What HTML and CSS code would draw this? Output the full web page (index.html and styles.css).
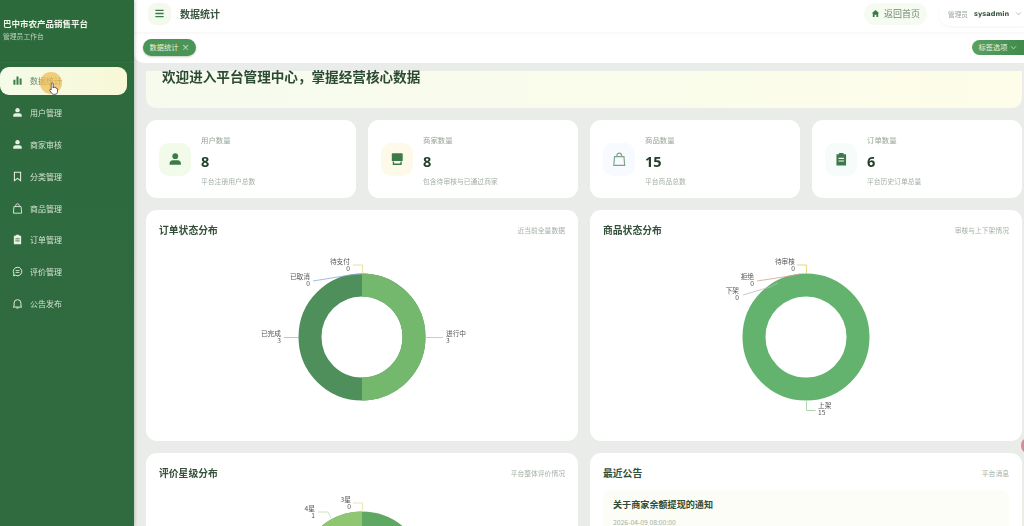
FILE: index.html
```html
<!DOCTYPE html>
<html lang="zh-CN">
<head>
<meta charset="utf-8">
<title>数据统计</title>
<link rel="stylesheet" href="styles.css">
</head>
<body>
<svg class="defs" width="0" height="0" aria-hidden="true">
  <symbol id="i-bars" viewBox="0 0 16 16"><path d="M2 7h3v7H2zM6.500 2h3v12h-3zM11 5h3v9h-3z" fill="currentColor"/></symbol>
  <symbol id="i-user" viewBox="0 0 16 16"><circle cx="8" cy="4.600" r="3.200" fill="currentColor"/><path d="M1.800 14v-1.600c0-2 1.800-3.200 3.400-3.200h5.600c1.600 0 3.400 1.200 3.400 3.200V14z" fill="currentColor"/></symbol>
  <symbol id="i-mark" viewBox="0 0 16 16"><path d="M3.500 1.800h9v12.400L8 10.800l-4.500 3.400z" fill="none" stroke="currentColor" stroke-width="1.500"/></symbol>
  <symbol id="i-bag" viewBox="0 0 16 16"><path d="M2.800 5.200h10.400l.8 9.600H2zM5.400 5.200V3.800a2.600 2.600 0 0 1 5.200 0v1.400" fill="none" stroke="currentColor" stroke-width="1.300"/></symbol>
  <symbol id="i-clip" viewBox="0 0 16 16"><path d="M5.500 1h5v1.600h2.800v12.400H2.700V2.600h2.800z" fill="currentColor"/><path d="M5 7h6M5 10h6" stroke="var(--ink,#fff)" stroke-width="1.200"/></symbol>
  <symbol id="i-chat" viewBox="0 0 16 16"><path d="M8 1.800a6.200 6.200 0 1 1-3 11.600l-2.900.8.800-2.800A6.200 6.200 0 0 1 8 1.800z" fill="none" stroke="currentColor" stroke-width="1.400"/><path d="M5.200 6.600h5.600M5.200 9.400h5.600" stroke="currentColor" stroke-width="1.200"/></symbol>
  <symbol id="i-bell" viewBox="0 0 16 16"><path d="M3 12.200V7.400a5 5 0 0 1 10 0v4.800l1.200 1H1.800z" fill="none" stroke="currentColor" stroke-width="1.400"/><path d="M6.400 14.600h3.200" stroke="currentColor" stroke-width="1.400"/></symbol>
  <symbol id="i-shop" viewBox="0 0 16 16"><path d="M2 2.500q0-1 1-1h10q1 0 1 1v7.500H2z" fill="currentColor"/><path d="M3.800 10.500v3h8.400v-3" fill="none" stroke="currentColor" stroke-width="1.500"/></symbol>
  <symbol id="i-down" viewBox="0 0 10 10"><path d="M1.500 3.400 5 6.900l3.500-3.500" fill="none" stroke="currentColor" stroke-width="1"/></symbol>
</svg>

<div class="app">
  <aside class="sidebar">
    <div class="brand">
      <div class="brand-name">巴中市农产品销售平台</div>
      <div class="brand-sub">管理员工作台</div>
    </div>
    <nav class="menu">
      <a class="menu-item active"><svg class="menu-icon"><use href="#i-bars"/></svg><span>数据统计</span>
        <i class="click-dot"></i>
        <svg class="hand" viewBox="0 0 12 16"><path d="M3.800 1.200c.8 0 1.200.5 1.200 1.200v5l.5-1.200c1-.3 1.500.1 1.600.7.9-.3 1.500.1 1.600.8.9-.2 1.500.3 1.500 1.100v3c0 1.800-1.200 3.200-3 3.200H5.500c-1 0-1.700-.5-2.300-1.300L.9 10.300c-.5-.8.500-1.700 1.300-1L2.600 9.700V2.400c0-.7.400-1.200 1.200-1.200z" fill="#fff" stroke="#333" stroke-width=".9"/></svg>
      </a>
      <a class="menu-item hovered"><svg class="menu-icon"><use href="#i-user"/></svg><span>用户管理</span></a>
      <a class="menu-item"><svg class="menu-icon"><use href="#i-user"/></svg><span>商家审核</span></a>
      <a class="menu-item"><svg class="menu-icon"><use href="#i-mark"/></svg><span>分类管理</span></a>
      <a class="menu-item"><svg class="menu-icon"><use href="#i-bag"/></svg><span>商品管理</span></a>
      <a class="menu-item"><svg class="menu-icon ink-green"><use href="#i-clip"/></svg><span>订单管理</span></a>
      <a class="menu-item"><svg class="menu-icon"><use href="#i-chat"/></svg><span>评价管理</span></a>
      <a class="menu-item"><svg class="menu-icon"><use href="#i-bell"/></svg><span>公告发布</span></a>
    </nav>
  </aside>

  <div class="main">
    <header class="topbar">
      <button class="burger" aria-label="菜单"><svg viewBox="0 0 12 12"><path d="M1.500 2.500h9M1.500 6h9M1.500 9.500h9" stroke="#3c7a48" stroke-width="1.400"/></svg></button>
      <div class="page-title">数据统计</div>
      <div class="top-right">
        <a class="home-link"><svg viewBox="0 0 12 12"><path d="M6 1.200 11 5.800H9.600V10.500H7.200V7.600H4.800V10.500H2.400V5.800H1z" fill="#3c7a48"/></svg><span>返回首页</span></a>
        <div class="account"><span class="role">管理员</span><b class="uname">sysadmin</b><svg class="chev"><use href="#i-down"/></svg></div>
      </div>
    </header>

    <div class="tabs">
      <div class="tab">数据统计<span class="tab-x">×</span></div>
      <div class="tab-options">标签选项<svg class="chev"><use href="#i-down"/></svg></div>
    </div>

    <main class="content">
      <div class="scroller">
        <section class="banner"><h1>欢迎进入平台管理中心，掌握经营核心数据</h1></section>

        <section class="stats">
          <article class="stat">
            <div class="stat-icon green"><svg><use href="#i-user"/></svg></div>
            <div class="stat-body"><div class="stat-label">用户数量</div><div class="stat-num">8</div><div class="stat-desc">平台注册用户总数</div></div>
          </article>
          <article class="stat">
            <div class="stat-icon cream"><svg><use href="#i-shop"/></svg></div>
            <div class="stat-body"><div class="stat-label">商家数量</div><div class="stat-num">8</div><div class="stat-desc">包含待审核与已通过商家</div></div>
          </article>
          <article class="stat">
            <div class="stat-icon blue"><svg><use href="#i-bag"/></svg></div>
            <div class="stat-body"><div class="stat-label">商品数量</div><div class="stat-num">15</div><div class="stat-desc">平台商品总数</div></div>
          </article>
          <article class="stat">
            <div class="stat-icon mint"><svg class="ink-pale"><use href="#i-clip"/></svg></div>
            <div class="stat-body"><div class="stat-label">订单数量</div><div class="stat-num">6</div><div class="stat-desc">平台历史订单总量</div></div>
          </article>
        </section>

        <section class="panels">
          <article class="panel">
            <div class="panel-head"><h2>订单状态分布</h2><span>近当前全量数据</span></div>
            <svg class="chart" viewBox="0 0 406 191">
              <circle class="seg" cx="203" cy="100" r="52" stroke="#4f8f5c"/>
              <circle class="seg half" cx="203" cy="100" r="52" stroke="#74b86e" pathLength="100" stroke-dasharray="50 100" transform="rotate(-90 203 100)"/>
              <path class="lead" d="M194 28h9.500v9" stroke="#e8d88a"/>
              <path class="lead" d="M154 44 191 38 203 37" stroke="#8aa8d8"/>
              <path class="lead" d="M125 100.500h15" stroke="#9cc4a0"/>
              <path class="lead" d="M266 100.500h18" stroke="#a6d08e"/>
              <text class="lbl end" x="191" y="26.500">待支付</text><text class="lbl end" x="191" y="33.500">0</text>
              <text class="lbl end" x="151" y="41.500">已取消</text><text class="lbl end" x="151" y="48.500">0</text>
              <text class="lbl end" x="122" y="98.500">已完成</text><text class="lbl end" x="122" y="105.500">3</text>
              <text class="lbl" x="287" y="98.500">进行中</text><text class="lbl" x="287" y="105.500">3</text>
            </svg>
          </article>

          <article class="panel">
            <div class="panel-head"><h2>商品状态分布</h2><span>审核与上下架情况</span></div>
            <svg class="chart" viewBox="0 0 406 191">
              <circle class="seg" cx="203" cy="100" r="52" stroke="#63b36f"/>
              <path class="lead" d="M194 28h9.500v9" stroke="#e6c868"/>
              <path class="lead" d="M154 44 187 39 197 37" stroke="#d8a090"/>
              <path class="lead" d="M140 58 167 50 175 46" stroke="#bbbbbb"/>
              <path class="lead" d="M203.500 164v9.500h9" stroke="#9cc8a0"/>
              <text class="lbl end" x="192" y="26.500">待审核</text><text class="lbl end" x="192" y="33.500">0</text>
              <text class="lbl end" x="151" y="41.500">拒绝</text><text class="lbl end" x="151" y="48.500">0</text>
              <text class="lbl end" x="136" y="55.500">下架</text><text class="lbl end" x="136" y="62.500">0</text>
              <text class="lbl" x="215" y="170.500">上架</text><text class="lbl" x="215" y="177.500">15</text>
            </svg>
          </article>

          <article class="panel">
            <div class="panel-head"><h2>评价星级分布</h2><span>平台整体评价情况</span></div>
            <svg class="chart" viewBox="0 0 406 191">
              <circle class="seg" cx="203" cy="95" r="52" stroke="#5fa864"/>
              <circle class="seg" cx="203" cy="95" r="52" stroke="#8fc672" pathLength="100" stroke-dasharray="16.670 100" transform="rotate(-150 203 95)"/>
              <path class="lead" d="M194 23h9.500v9" stroke="#e8e0a0"/>
              <path class="lead" d="M159 32h10l3 6" stroke="#c4dca8"/>
              <text class="lbl end" x="192" y="21.500">3星</text><text class="lbl end" x="192" y="28.500">0</text>
              <text class="lbl end" x="156" y="30.500">4星</text><text class="lbl end" x="156" y="37.500">1</text>
            </svg>
          </article>

          <article class="panel">
            <div class="panel-head"><h2>最近公告</h2><span>平台消息</span></div>
            <div class="notice">
              <h3>关于商家余额提现的通知</h3>
              <time>2026-04-09 08:00:00</time>
            </div>
          </article>
        </section>
      </div>
    </main>
  </div>
  <i class="edge-dot"></i>
</div>
</body>
</html>
```

FILE: styles.css
```css
* { box-sizing: border-box; }
html, body { margin: 0; height: 100%; overflow: hidden; }
body {
  font-family: "Noto Sans CJK SC", "Noto Sans", sans-serif;
  color: #2a4a30;
  background: #e9ece9;
}
.defs { position: absolute; }
.app { position: relative; display: flex; height: 526px; overflow: hidden; filter: blur(.5px); }

/* sidebar */
.sidebar {
  width: 134px;
  flex: none;
  background: linear-gradient(180deg, #2c6a3c, #306b40);
  color: #d5e2d3;
  box-shadow: 1px 0 3px rgba(40, 70, 50, .25);
  z-index: 2;
}
.brand { height: 63px; padding: 17px 3px 0; border-bottom: 1px solid rgba(255, 255, 255, .04); }
.brand-name { font-size: 8.500px; line-height: 12px; font-weight: 700; color: #f2f6ec; white-space: nowrap; }
.brand-sub { font-size: 6.800px; line-height: 10px; margin-top: 2px; color: #bcd2bb; }
.menu { display: flex; flex-direction: column; gap: 4px; padding: 4px 7px 0 0; }
.menu-item {
  position: relative;
  height: 27.800px;
  display: flex;
  align-items: center;
  gap: 7px;
  padding-left: 12px;
  border-radius: 9px;
  font-size: 8px;
  color: #d5e2d3;
}
.menu-icon { width: 11px; height: 11px; flex: none; --ink: #2f6b3d; color: #e6efe2; }
.menu-item.active { background: linear-gradient(90deg, #f5fbe9, #f8f8d6); color: #6f8a6c; }
.menu-item.active .menu-icon { color: #3f7f4c; }
.menu-item.hovered { background: #2e6a3e; }
.click-dot { position: absolute; left: 40px; top: 5px; width: 22px; height: 22px; border-radius: 50%; background: rgba(238, 186, 80, .72); }
.hand { position: absolute; left: 49px; top: 14px; width: 10px; height: 15px; }

/* main */
.main { flex: 1; min-width: 0; display: flex; flex-direction: column; }
.topbar {
  height: 32px;
  flex: none;
  display: flex;
  align-items: center;
  padding: 0 0 5px 14px;
  background: #fff;
  box-shadow: 0 1px 3px rgba(90, 110, 90, .08);
  z-index: 1;
}
.burger { width: 23px; height: 22px; padding: 0; display: flex; align-items: center; justify-content: center; border: 0; border-radius: 8px; background: #f3faed; }
.burger svg { width: 11px; height: 11px; }
.page-title { margin-left: 9px; font-size: 10px; font-weight: 700; color: #3a5440; }
.top-right { margin-left: auto; display: flex; align-items: center; }
.home-link { display: flex; align-items: center; flex: none; gap: 4px; width: 63px; height: 22px; padding: 0 7px; border-radius: 11px; background: #f5fbf1; font-size: 9px; color: #6c8870; white-space: nowrap; }
.home-link svg { width: 9px; height: 9px; flex: none; }
.account { display: flex; align-items: center; flex: none; width: 85px; height: 24px; margin-left: 12px; padding: 0 0 0 9px; border-radius: 12px 0 0 12px; background: #fff; box-shadow: 0 1px 3px rgba(90, 110, 90, .08); white-space: nowrap; }
.role { font-size: 6.700px; color: #9aa99c; }
.uname { margin-left: 6px; font: 700 6.600px "DejaVu Sans", sans-serif; color: #36523d; }
.chev { width: 7px; height: 7px; margin-left: 6px; flex: none; color: #9aa99c; }

.tabs {
  height: 31px;
  flex: none;
  display: flex;
  align-items: center;
  justify-content: space-between;
  padding: 0 0 1px 9px;
  background: #fff;
  border-bottom-left-radius: 10px;
}
.tab { height: 17px; width: 53px; display: flex; align-items: center; justify-content: center; gap: 3px; border-radius: 9px; background: #4a9455; color: #e6f2e2; font-size: 7.200px; box-shadow: 0 1px 2px rgba(60, 100, 60, .3); }
.tab-x { font-size: 8px; line-height: 1; }
.tab-options { height: 15px; width: 52px; display: flex; align-items: center; justify-content: center; border-radius: 8px 0 0 8px; background: linear-gradient(90deg, #5aa163, #3f8a4c); color: #e6f2e2; font-size: 7.200px; }
.tab-options .chev { margin-left: 3px; color: #e6f2e2; }

/* content */
.content { flex: 1; min-height: 0; padding: 8px 2px 0 12px; overflow: hidden; }
.scroller { height: 100%; }
.banner { height: 37px; padding-left: 16px; border-radius: 0 0 10px 10px; background: linear-gradient(90deg, #f6fbee, #fdfde9); }
.banner h1 { margin: 0; font-size: 13.600px; line-height: 13px; font-weight: 700; color: #2c4a33; white-space: nowrap; position: relative; top: -1px; }

.stats { display: grid; grid-template-columns: repeat(4, 210px); gap: 12px; margin-top: 12px; }
.stat { height: 78px; display: flex; align-items: center; gap: 10px; padding: 0 13px; border-radius: 11px; background: #fff; }
.stat-icon { width: 32px; height: 33px; flex: none; display: flex; align-items: center; justify-content: center; border-radius: 10px; }
.stat-icon svg { width: 14.500px; height: 14.500px; color: #3c7a48; }
.green { background: #f2fbe9; }
.cream { background: #fdfae9; }
.blue { background: #f7fafe; }
.blue svg { color: #7ea58a; }
.mint { background: #f5fcf9; }
.ink-pale { --ink: #f3fbf8; }
.stat-body { margin-top: 3px; }
.stat-label { font-size: 7.400px; line-height: 10px; color: #94a496; }
.stat-num { margin-top: 8px; font: 700 14.500px/18px "Open Sans", sans-serif; color: #24402c; }
.stat-desc { margin-top: 5px; font-size: 6.800px; line-height: 10px; color: #a3b0a4; }

.panels { display: grid; grid-template-columns: repeat(2, 432px); grid-auto-rows: 231px; gap: 12px; margin-top: 12px; }
.panel { padding: 13px; border-radius: 11px; background: #fff; }
.panel-head { height: 14px; display: flex; align-items: center; justify-content: space-between; }
.panel-head h2 { margin: 0; font-size: 9.800px; font-weight: 700; color: #34503a; }
.panel-head span { font-size: 6.800px; color: #a3b0a4; }
.chart { display: block; width: 406px; height: 191px; }
.seg { fill: none; stroke-width: 23; }
.lead { fill: none; stroke-width: .8; }
.lbl { font-size: 6.700px; fill: #555; }
.end { text-anchor: end; }

.notice { margin-top: 10px; padding: 8px 10px; height: 70px; border-radius: 8px; background: #fbfdf6; }
.notice h3 { margin: 0; font-size: 9.100px; line-height: 12px; font-weight: 700; color: #2f4c36; }
.notice time { display: block; margin-top: 7px; font-size: 6.800px; line-height: 10px; color: #a3b0a4; }

.edge-dot { position: absolute; right: -5px; top: 439px; width: 8px; height: 13px; border-radius: 50%; background: #d98a96; }
```
